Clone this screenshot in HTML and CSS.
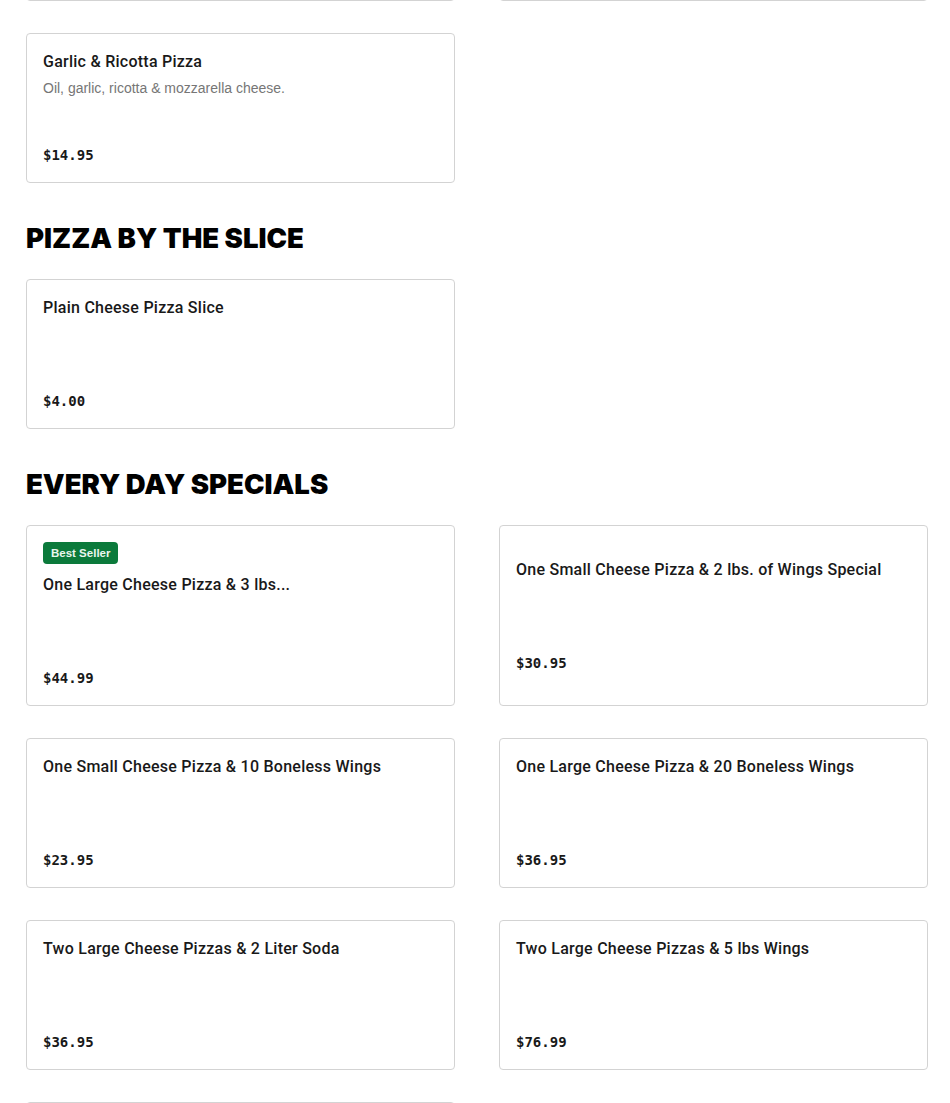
FILE: index.html
```html
<!DOCTYPE html>
<html>
<head>
<meta charset="utf-8">
<link rel="stylesheet" href="styles.css">
</head>
<body>
<main class="menu">
  <section class="section section-prev">
    <div class="grid">
      <div class="card stub"></div>
      <div class="card stub"></div>
    </div>
  </section>

  <section class="section section-first">
    <div class="grid">
      <div class="card">
        <div class="content">
          <div class="info">
            <div class="title">Garlic &amp; Ricotta Pizza</div>
            <div class="desc">Oil, garlic, ricotta &amp; mozzarella cheese.</div>
          </div>
          <div class="price">$14.95</div>
        </div>
      </div>
    </div>
  </section>

  <section class="section">
    <h2 class="heading">PIZZA BY THE SLICE</h2>
    <div class="grid">
      <div class="card">
        <div class="content">
          <div class="info">
            <div class="title">Plain Cheese Pizza Slice</div>
          </div>
          <div class="price">$4.00</div>
        </div>
      </div>
    </div>
  </section>

  <section class="section">
    <h2 class="heading">EVERY DAY SPECIALS</h2>
    <div class="grid">
      <div class="card">
        <div class="content">
          <span class="badge">Best Seller</span>
          <div class="info">
            <div class="title">One Large Cheese Pizza &amp; 3 lbs...</div>
          </div>
          <div class="price">$44.99</div>
        </div>
      </div>
      <div class="card">
        <div class="content">
          <div class="info">
            <div class="title">One Small Cheese Pizza &amp; 2 lbs. of Wings Special</div>
          </div>
          <div class="price">$30.95</div>
        </div>
      </div>
      <div class="card">
        <div class="content">
          <div class="info">
            <div class="title">One Small Cheese Pizza &amp; 10 Boneless Wings</div>
          </div>
          <div class="price">$23.95</div>
        </div>
      </div>
      <div class="card">
        <div class="content">
          <div class="info">
            <div class="title">One Large Cheese Pizza &amp; 20 Boneless Wings</div>
          </div>
          <div class="price">$36.95</div>
        </div>
      </div>
      <div class="card">
        <div class="content">
          <div class="info">
            <div class="title">Two Large Cheese Pizzas &amp; 2 Liter Soda</div>
          </div>
          <div class="price">$36.95</div>
        </div>
      </div>
      <div class="card">
        <div class="content">
          <div class="info">
            <div class="title">Two Large Cheese Pizzas &amp; 5 lbs Wings</div>
          </div>
          <div class="price">$76.99</div>
        </div>
      </div>
      <div class="card">
        <div class="content">
          <div class="info">
            <div class="title">&nbsp;</div>
          </div>
          <div class="price">&nbsp;</div>
        </div>
      </div>
    </div>
  </section>
</main>
</body>
</html>
```
FILE: styles.css
```css
html, body {
  margin: 0;
  padding: 0;
  background: #ffffff;
}

body {
  font-family: Roboto, "Liberation Sans", Arial, sans-serif;
  color: #191919;
}

.menu {
  padding: 0 22px 0 26px;
  width: 902px;
}

.section-prev {
  margin-top: -149px;
}

.section-first {
  padding-top: 32px;
}

.section {
  display: flex;
  flex-direction: column;
}

.heading {
  margin: 37px 0 23px;
  font-family: Inter, "Liberation Sans", sans-serif;
  font-weight: 900;
  font-size: 27.5px;
  line-height: 36px;
  color: #000000;
}

.grid {
  display: grid;
  grid-template-columns: 429px 429px;
  column-gap: 44px;
  row-gap: 32px;
}

.card {
  box-sizing: border-box;
  min-height: 150px;
  border: 1px solid #d3d3d3;
  border-radius: 4px;
  padding: 16px;
  display: flex;
  flex-direction: column;
  justify-content: center;
}

.stub {
  height: 150px;
}

.content {
  display: flex;
  flex-direction: column;
}

.badge {
  align-self: flex-start;
  background: #0b7a3b;
  color: #e9f6ee;
  font-family: "Liberation Sans", Arial, sans-serif;
  font-weight: 700;
  font-size: 11.5px;
  line-height: 22px;
  height: 22px;
  padding: 0 8px;
  border-radius: 4px;
  margin-bottom: 9px;
}

.info {
  min-height: 96px;
}

.title {
  font-family: Roboto, "Liberation Sans", sans-serif;
  font-size: 16px;
  line-height: 22px;
  font-weight: 500;
  letter-spacing: 0.25px;
  color: #191919;
  padding-top: 1px;
  margin-bottom: -1px;
}

.desc {
  font-family: "Liberation Sans", Arial, sans-serif;
  font-size: 14px;
  line-height: 20px;
  margin-top: 6px;
  color: #767676;
}

.price {
  font-family: "DejaVu Sans Mono", "Liberation Mono", monospace;
  font-size: 14px;
  line-height: 20px;
  font-weight: 700;
  color: #191919;
  margin-top: -1px;
  margin-bottom: 1px;
}
```
